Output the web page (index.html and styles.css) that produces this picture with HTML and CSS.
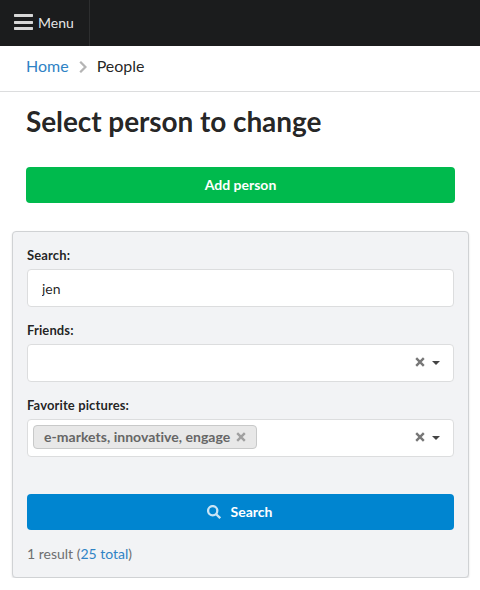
FILE: index.html
```html
<!DOCTYPE html>
<html lang="en">
<head>
<meta charset="utf-8">
<title>Select person to change</title>
<link rel="stylesheet" href="styles.css">
</head>
<body>
<nav class="topbar">
  <a class="menu-item">
    <svg class="bars" viewBox="0 0 19 17"><path d="M.5 0h18l.5.5v2l-.5.5H.5L0 2.500v-2zM.5 7h18l.5.5v2l-.5.5H.5L0 9.500v-2zM.5 13h18l.5.5v2l-.5.5H.5L0 15.500v-2z"/></svg>
    <span>Menu</span>
  </a>
</nav>
<div class="breadcrumb">
  <a class="link">Home</a>
  <svg class="chevron" viewBox="0 0 8 12"><path d="M1.200 .8L6.400 6L1.200 11.200"/></svg>
  <span>People</span>
</div>
<main>
  <h1>Select person to change</h1>
  <a class="button add">Add person</a>
  <form class="panel">
    <div class="field">
      <label for="q">Search:</label>
      <input class="control" id="q" type="text" value="jen">
    </div>
    <div class="field">
      <label>Friends:</label>
      <div class="control select">
        <svg class="clear" viewBox="0 0 10 10"><path d="M1.200 1.200L8.800 8.800M8.800 1.200L1.200 8.800"/></svg>
        <svg class="caret" viewBox="0 0 8 4"><path d="M0 0h8L4 4z"/></svg>
      </div>
    </div>
    <div class="field">
      <label>Favorite pictures:</label>
      <div class="control select">
        <span class="tag">e-markets, innovative, engage
          <svg class="remove" viewBox="0 0 10 10"><path d="M1.200 1.200L8.800 8.800M8.800 1.200L1.200 8.800"/></svg>
        </span>
        <svg class="clear" viewBox="0 0 10 10"><path d="M1.200 1.200L8.800 8.800M8.800 1.200L1.200 8.800"/></svg>
        <svg class="caret" viewBox="0 0 8 4"><path d="M0 0h8L4 4z"/></svg>
      </div>
    </div>
    <a class="button search">
      <svg class="lens" viewBox="0 0 14 14"><circle cx="5.7" cy="5.7" r="4.6"/><path d="M9.200 9.200L13.200 13.200"/></svg>
      <span>Search</span>
    </a>
    <p class="summary">1 result (<a class="link">25 total</a>)</p>
  </form>
</main>
</body>
</html>
```
FILE: styles.css
```css
* { box-sizing: border-box; }

body {
  margin: 0;
  background: #fff;
  color: rgba(0, 0, 0, .87);
  font: 14px/20px Lato, sans-serif;
  font-variant-ligatures: none;
}

svg { display: block; flex: none; }

.link { color: #2f83c5; }

.topbar {
  display: flex;
  height: 46px;
  background: #1b1c1d;
}

.menu-item {
  display: flex;
  align-items: center;
  width: 90px;
  padding-left: 14px;
  border-right: 1px solid #2d2e2f;
  color: rgba(255, 255, 255, .9);
}

.bars {
  width: 19px;
  height: 17px;
  margin: 0 5px 1px 0;
  fill: #d7d7d7;
}

.breadcrumb {
  display: flex;
  align-items: center;
  height: 46px;
  padding: 0 26px 6px;
  border-bottom: 1px solid #dcddde;
  font-size: 16px;
}

.chevron {
  width: 8px;
  height: 12px;
  margin: 2px 10px 0;
  fill: none;
  stroke: #b5b5b5;
  stroke-width: 2.3;
}

h1 {
  margin: 11px 14px 27px;
  font-size: 28px;
  line-height: 37px;
  font-weight: 700;
  letter-spacing: -.08px;
}

main { padding: 0 11px 0 12px; }

.button {
  display: flex;
  align-items: center;
  justify-content: center;
  height: 36px;
  border-radius: 4px;
  color: #fff;
  font-weight: 700;
}

.add {
  margin: 0 14px 28px;
  background: #00ba4d;
}

.panel {
  height: 347px;
  padding: 14px;
  background: #f2f3f5;
  border: 1px solid #d0d2d4;
  border-radius: 4px;
  box-shadow: 0 1px 2px rgba(34, 36, 38, .15);
}

.field { margin-bottom: 14px; }

label {
  display: block;
  height: 19px;
  margin-bottom: 4px;
  font-size: 13px;
  line-height: 18px;
  font-weight: 700;
  letter-spacing: .12px;
}

.control {
  display: flex;
  width: 100%;
  height: 38px;
  padding: 0 14px;
  background: #fff;
  border: 1px solid #dcddde;
  border-radius: 4px;
  color: inherit;
  font: inherit;
  outline: none;
}

.select {
  align-items: center;
  padding: 0 13px 0 5px;
}

.clear {
  width: 10px;
  height: 10px;
  margin: 0 7px 2px auto;
  stroke: #777;
  stroke-width: 2.4;
}

.caret {
  width: 8px;
  height: 4px;
  fill: #444;
}

.tag {
  display: flex;
  align-items: center;
  height: 24px;
  margin-bottom: 2px;
  padding: 0 10px;
  background: #e8e8e8;
  border: 1px solid #c8c9c9;
  border-radius: 4px;
  color: #666;
  font-weight: 700;
  letter-spacing: .03px;
}

.remove {
  width: 10px;
  height: 10px;
  margin-left: 6px;
  stroke: #a0a0a0;
  stroke-width: 2.4;
}

.search {
  margin-top: 37px;
  padding-right: 2px;
  background: #0085d0;
}

.lens {
  width: 14px;
  height: 14px;
  margin-right: 10px;
  fill: none;
  stroke: #c9e4f5;
  stroke-width: 2.3;
}

.summary {
  margin: 14px 0 0;
  color: #6e6f70;
}
```
